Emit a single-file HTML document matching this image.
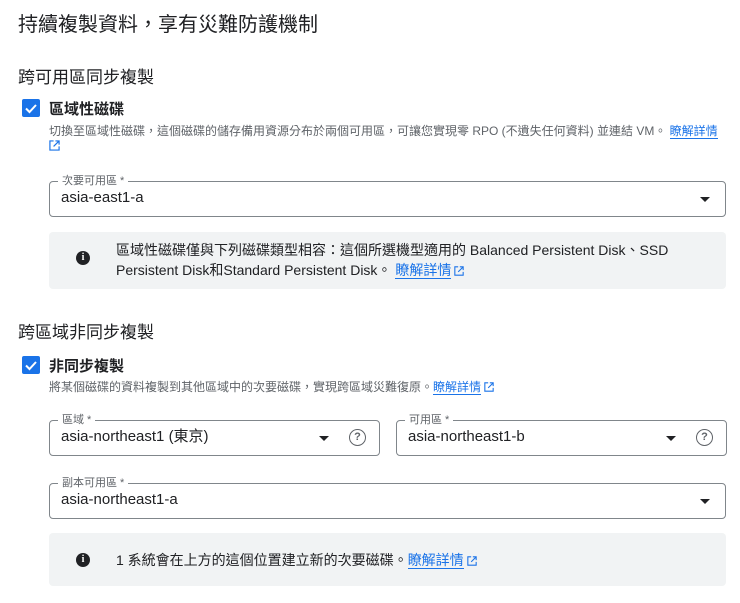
<!DOCTYPE html>
<html><head><meta charset="utf-8"><style>
*{box-sizing:border-box;margin:0;padding:0}
body{width:740px;height:603px;background:#fff;font-family:"Liberation Sans","Noto Sans CJK TC",sans-serif;color:#202124;position:relative;overflow:hidden}
.a{position:absolute;white-space:nowrap}
.cb{position:absolute;width:18px;height:18px;background:#1a73e8;border-radius:2px}
.desc{font-size:12px;color:#5f6368}
.lk{color:#1a73e8;border-bottom:1px solid #1a73e8}
.sel{position:absolute;border:1px solid #80868b;border-radius:4px;height:36px}
.sel .lab{position:absolute;top:-8px;left:8px;background:#fff;padding:0 4px;font-size:11px;color:#5f6368;line-height:14px}
.sel .v{position:absolute;left:11px;top:7px;font-size:15px;line-height:18px}
.tri{position:absolute;top:15px;width:0;height:0;border-left:5px solid transparent;border-right:5px solid transparent;border-top:5px solid #202124}
.q{position:absolute;top:8px;width:17px;height:17px;border:1.6px solid #5f6368;border-radius:50%;font-size:11px;font-weight:bold;color:#5f6368;text-align:center;line-height:14px}
.info{position:absolute;left:49px;width:677px;background:#f1f3f4;border-radius:4px}
.ic{position:absolute;width:14px;height:14px;border-radius:50%;background:#202124;color:#fff;font-size:10px;font-weight:bold;text-align:center;line-height:14px;font-family:"Liberation Serif",serif}
.ext{display:inline-block;width:10px;height:10px;vertical-align:-1px;margin-left:3px}
</style></head><body>
<div class="a" style="left:18px;top:8px;font-size:20px">持續複製資料，享有災難防護機制</div>
<div class="a" style="left:18px;top:63px;font-size:17px">跨可用區同步複製</div>
<div class="cb" style="left:22px;top:99px"><svg width="18" height="18"><path d="M4 9.5l3.5 3.5L14 6" stroke="#fff" stroke-width="2" fill="none"/></svg></div>
<div class="a" style="left:49px;top:98px;font-size:15px;font-weight:600">區域性磁碟</div>
<div class="a desc" style="left:49px;top:122px">切換至區域性磁碟，這個磁碟的儲存備用資源分布於兩個可用區，可讓您實現零 RPO (不遺失任何資料) 並連結 VM。 <span class="lk">瞭解詳情</span></div>
<svg class="a" style="left:49px;top:140px" width="11" height="11" viewBox="0 0 12 12"><path d="M5 1H1v10h10V7M7 1h4v4M11 1L5 7" stroke="#1a73e8" stroke-width="1.3" fill="none"/></svg>
<div class="sel" style="left:49px;top:181px;width:677px"><span class="lab">次要可用區 *</span><span class="v">asia-east1-a</span><span class="tri" style="left:650px"></span></div>
<div class="info" style="top:232px;height:57px"><span class="ic" style="left:27px;top:19px">i</span>
<div class="a" style="left:67px;top:8px;font-size:14px;line-height:20px">區域性磁碟僅與下列磁碟類型相容：這個所選機型適用的 Balanced Persistent Disk、SSD<br>Persistent Disk和Standard Persistent Disk。 <span class="lk">瞭解詳情</span><svg class="ext" viewBox="0 0 12 12"><path d="M5 1H1v10h10V7M7 1h4v4M11 1L5 7" stroke="#1a73e8" stroke-width="1.3" fill="none"/></svg></div></div>
<div class="a" style="left:18px;top:318px;font-size:17px">跨區域非同步複製</div>
<div class="cb" style="left:22px;top:356px"><svg width="18" height="18"><path d="M4 9.5l3.5 3.5L14 6" stroke="#fff" stroke-width="2" fill="none"/></svg></div>
<div class="a" style="left:49px;top:355px;font-size:15px;font-weight:600">非同步複製</div>
<div class="a desc" style="left:49px;top:378px">將某個磁碟的資料複製到其他區域中的次要磁碟，實現跨區域災難復原。<span class="lk">瞭解詳情</span><svg class="ext" viewBox="0 0 12 12"><path d="M5 1H1v10h10V7M7 1h4v4M11 1L5 7" stroke="#1a73e8" stroke-width="1.3" fill="none"/></svg></div>
<div class="sel" style="left:49px;top:420px;width:331px"><span class="lab">區域 *</span><span class="v">asia-northeast1 (東京)</span><span class="tri" style="left:269px"></span><span class="q" style="left:299px">?</span></div>
<div class="sel" style="left:396px;top:420px;width:331px"><span class="lab">可用區 *</span><span class="v">asia-northeast1-b</span><span class="tri" style="left:269px"></span><span class="q" style="left:299px">?</span></div>
<div class="sel" style="left:49px;top:483px;width:677px"><span class="lab">副本可用區 *</span><span class="v">asia-northeast1-a</span><span class="tri" style="left:650px"></span></div>
<div class="info" style="top:533px;height:53px"><span class="ic" style="left:27px;top:20px">i</span>
<div class="a" style="left:67px;top:17px;font-size:14px">1 系統會在上方的這個位置建立新的次要磁碟。<span class="lk">瞭解詳情</span><svg class="ext" viewBox="0 0 12 12"><path d="M5 1H1v10h10V7M7 1h4v4M11 1L5 7" stroke="#1a73e8" stroke-width="1.3" fill="none"/></svg></div></div>
</body></html>
